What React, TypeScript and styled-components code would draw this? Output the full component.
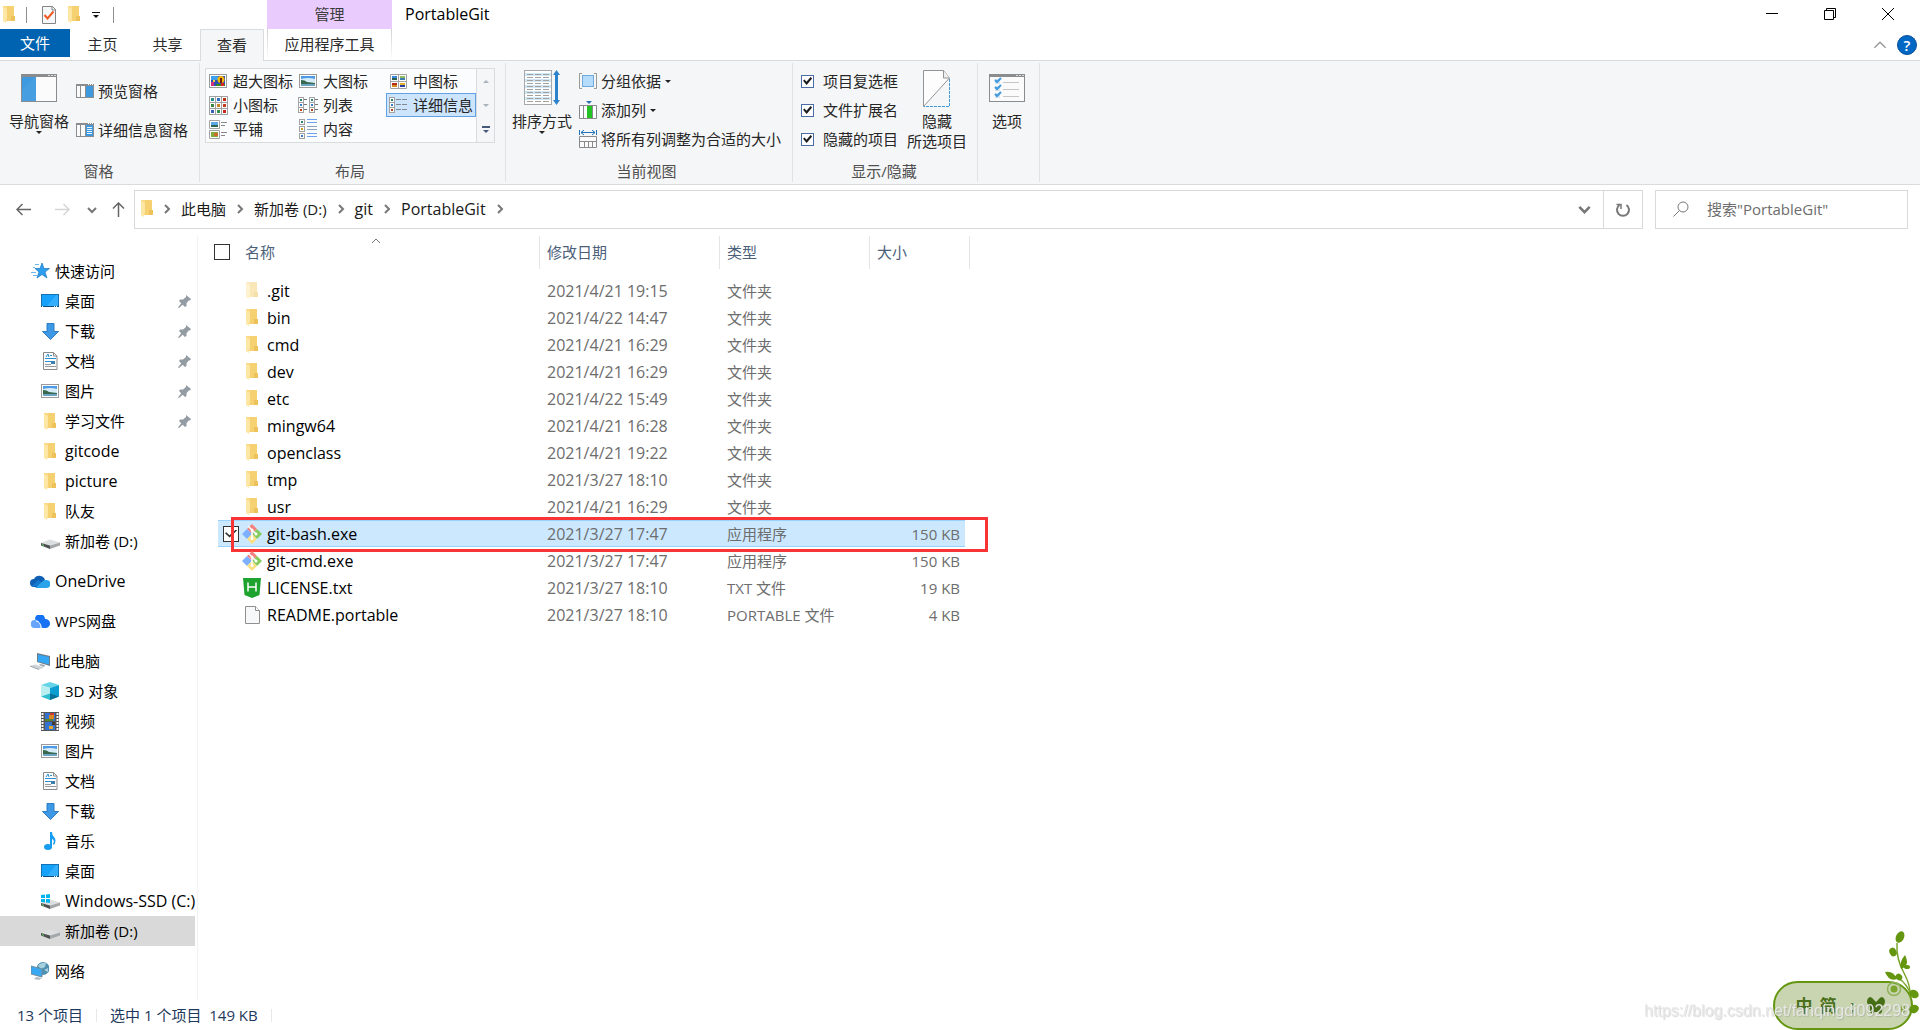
import React from "react";
import styled, { createGlobalStyle, css } from "styled-components";

const GlobalStyle = createGlobalStyle`
  *, *::before, *::after { box-sizing: border-box; }
  html, body, #root { height: 100%; }
  body {
    margin: 0;
    background: #fff;
    color: #000;
    font: 15px/20px "Open Sans", "Noto Sans CJK SC", sans-serif;
    overflow: hidden;
  }
  button, input { font: inherit; color: inherit; }
  svg { display: block; flex: none; }
`;

/* ---------- window frame ---------- */

const Window = styled.div`
  display: flex;
  flex-direction: column;
  min-height: 100vh;
  position: relative;
`;

const PlainButton = styled.button`
  display: flex;
  align-items: center;
  justify-content: center;
  border: 0;
  padding: 0;
  margin: 0;
  background: transparent;
  white-space: nowrap;
`;

const TitleBar = styled.header`
  display: flex;
  height: 29px;
  padding-right: 3px;
`;

const QuickAccess = styled.div`
  display: flex;
  align-items: center;
  width: 267px;
  padding-left: 3px;
`;

const QuickDivider = styled.span<{ $left: number; $right: number }>`
  width: 1px;
  height: 16px;
  margin: 0 ${(p) => p.$right}px 0 ${(p) => p.$left}px;
  background: #8e8e8e;
`;

const QuickTools = styled.div`
  display: flex;
  align-items: center;
  gap: 12px;
`;

const ContextTab = styled.div`
  width: 125px;
  line-height: 28px;
  background: #e9ccfd;
  color: #3c3c3c;
  text-align: center;
`;

const WindowTitle = styled.h1`
  flex: 1;
  margin: 0 0 0 13px;
  font-size: 16px;
  font-weight: 400;
  line-height: 28px;
`;

const CaptionButton = styled(PlainButton)`
  width: 58px;
  height: 28px;
`;

const TabBar = styled.nav`
  display: flex;
  height: 32px;
  color: #2b2b2b;
  border-bottom: 1px solid #dadbdc;
`;

const FileTab = styled(PlainButton)`
  width: 70px;
  height: 28px;
  background: #0063b1;
  color: #fff;
`;

const Tab = styled(PlainButton)<{ $active?: boolean }>`
  width: 65px;
  height: 31px;
  padding-bottom: 2px;
  ${(p) =>
    p.$active &&
    css`
      width: 64px;
      height: 32px;
      background: #f5f6f7;
      border: 1px solid #dadbdc;
      border-bottom: 0;
    `}
`;

const ToolsTab = styled(PlainButton)`
  width: 125px;
  height: 31px;
  margin-left: 3px;
  padding-bottom: 2px;
  border: solid;
  border-width: 0 1px;
  border-image: linear-gradient(#d0d0d0, #fff) 1;
`;

const TabBarEnd = styled.div`
  display: flex;
  align-items: center;
  gap: 10px;
  margin-left: auto;
  padding-right: 3px;
`;

const HelpButton = styled(PlainButton)`
  width: 20px;
  height: 20px;
  border-radius: 50%;
  border: 1px solid #0b4f94;
  background: #0067c5;
  color: #fff;
  font-weight: 600;
`;

/* ---------- ribbon ---------- */

const Ribbon = styled.section`
  display: flex;
  height: 124px;
  padding: 2px 0;
  background: #f5f6f7;
  border-bottom: 1px solid #dadbdc;
  color: #262626;
`;

const Group = styled.div<{ $left: number; $right: number }>`
  display: flex;
  flex-direction: column;
  border-right: 1px solid #e2e3e4;
  padding: 0 ${(p) => p.$right}px 0 ${(p) => p.$left}px;
`;

const GroupBody = styled.div<{ $gap: number }>`
  display: flex;
  flex: 1;
  align-items: flex-start;
  gap: ${(p) => p.$gap}px;
`;

const GroupLabel = styled.div`
  height: 21px;
  color: #4f4f4f;
  text-align: center;
`;

const BigButton = styled(PlainButton)`
  flex-direction: column;
  padding-top: 5px;
  min-width: 36px;
`;

const BigIcon = styled.span`
  display: flex;
  align-items: center;
  height: 40px;
  margin-bottom: 3px;
`;

const Commands = styled.div<{ $top: number; $gap: number }>`
  display: flex;
  flex-direction: column;
  gap: ${(p) => p.$gap}px;
  padding-top: ${(p) => p.$top}px;
`;

const Command = styled(PlainButton)`
  height: 24px;
  gap: 4px;
  justify-content: flex-start;
`;

const Caret = styled.span<{ $color?: string; $up?: boolean }>`
  width: 0;
  height: 0;
  border: 3px solid transparent;
  border-top: 3px solid ${(p) => p.$color ?? "#222"};
  border-bottom: 0;
  transform: ${(p) => (p.$up ? "rotate(180deg)" : "none")};
`;

const Gallery = styled.div`
  display: flex;
  height: 75px;
  margin-top: 5px;
  border: 1px solid #dadbdc;
  background: #fbfcfd;
`;

const GalleryGrid = styled.div`
  display: grid;
  grid-template-columns: repeat(3, 90px);
  grid-auto-rows: 24px;
`;

const GalleryItem = styled(PlainButton)<{ $selected?: boolean }>`
  justify-content: flex-start;
  gap: 5px;
  padding-left: 1px;
  border: 1px solid ${(p) => (p.$selected ? "#62a2e4" : "transparent")};
  background: ${(p) => (p.$selected ? "#cce4fc" : "transparent")};
`;

const GalleryScroll = styled.div`
  display: flex;
  flex-direction: column;
  width: 18px;
  border-left: 1px solid #dadbdc;
  background: #f5f6f7;
`;

const ScrollButton = styled(PlainButton)`
  flex: 1;
  flex-direction: column;
  gap: 2px;
`;

const MoreBar = styled.span`
  width: 8px;
  height: 2px;
  background: #46597a;
`;

const CheckLabel = styled.label`
  display: flex;
  align-items: center;
  gap: 9px;
  height: 24px;
  white-space: nowrap;
`;

const RibbonCheckbox = styled.input`
  appearance: none;
  display: grid;
  place-items: center;
  width: 13px;
  height: 13px;
  margin: 0;
  border: 1px solid #4a6da5;
  background: #fff;
  &:checked::before {
    content: "";
    width: 9px;
    height: 8px;
    background: #1b1b1b;
    clip-path: polygon(0 48%, 16% 30%, 38% 58%, 84% 0, 100% 18%, 40% 100%);
  }
`;

/* ---------- address row ---------- */

const AddressRow = styled.div`
  display: flex;
  align-items: center;
  padding: 5px 12px 7px 0;
`;

const NavButtons = styled.div`
  display: flex;
  align-items: center;
  width: 134px;
  padding-left: 16px;
`;

const NavButton = styled(PlainButton)<{ $gap: number }>`
  margin-right: ${(p) => p.$gap}px;
`;

const AddressBox = styled.div`
  display: flex;
  flex: 1;
  height: 39px;
  border: 1px solid #d9d9d9;
`;

const Crumbs = styled.div`
  display: flex;
  align-items: center;
  flex: 1;
  padding: 0 0 2px 6px;
`;

const Crumb = styled.a<{ $latin: boolean }>`
  color: #1a1a1a;
  font-size: ${(p) => (p.$latin ? 16 : 15)}px;
  text-decoration: none;
  white-space: nowrap;
`;

const CrumbArrow = styled.span`
  display: flex;
  justify-content: center;
  width: 28px;
`;

const DropButton = styled(PlainButton)`
  width: 38px;
`;

const RefreshButton = styled(PlainButton)`
  width: 39px;
  border-left: 1px solid #d9d9d9;
`;

const SearchBox = styled.label`
  display: flex;
  align-items: center;
  gap: 18px;
  width: 253px;
  height: 39px;
  margin-left: 12px;
  padding: 0 0 2px 17px;
  border: 1px solid #d9d9d9;
`;

const SearchInput = styled.input`
  flex: 1;
  min-width: 0;
  border: 0;
  padding: 0;
  outline: 0;
  background: transparent;
  &::placeholder {
    color: #6d6d6d;
    opacity: 1;
  }
`;

/* ---------- body ---------- */

const Body = styled.div`
  display: flex;
  flex: 1;
`;

const Sidebar = styled.nav`
  width: 198px;
  padding: 20px 2px 0 0;
  border-right: 1px solid #f2f2f2;
`;

const TreeSection = styled.div`
  margin-bottom: 10px;
`;

const TreeItem = styled.a<{ $child?: boolean; $selected?: boolean; $latin: boolean }>`
  display: flex;
  align-items: center;
  height: 30px;
  gap: 5px;
  padding-left: ${(p) => (p.$child ? 40 : 30)}px;
  background: ${(p) => (p.$selected ? "#d9d9d9" : "transparent")};
  color: #000;
  font-size: ${(p) => (p.$latin ? 16 : 15)}px;
  text-decoration: none;
  white-space: nowrap;
`;

const IconSlot = styled.span`
  display: flex;
  flex: none;
  justify-content: center;
  width: 20px;
`;

const PinSlot = styled.span`
  margin-left: auto;
  padding-right: 4px;
`;

const Main = styled.main`
  flex: 1;
`;

const FileTable = styled.table`
  width: 772px;
  table-layout: fixed;
  border-collapse: separate;
  border-spacing: 0;
  text-align: left;
`;

const Column = styled.col<{ $width: number }>`
  width: ${(p) => p.$width}px;
`;

const HeadCell = styled.th<{ $left: number }>`
  position: relative;
  height: 41px;
  padding: 0;
  vertical-align: top;
  font-weight: 400;
  color: #4c607a;
  & > div {
    display: flex;
    align-items: center;
    gap: 15px;
    height: 33px;
    padding: 0 0 2px ${(p) => p.$left}px;
    border-right: 1px solid #e5e5e5;
  }
`;

const SortMark = styled.span`
  position: absolute;
  top: 0;
  left: 173px;
`;

const FileCheckbox = styled.input`
  appearance: none;
  display: grid;
  place-items: center;
  flex: none;
  width: 16px;
  height: 16px;
  margin: 0;
  border: 1px solid #333;
  background: #fff;
  &:checked::before {
    content: "";
    width: 12px;
    height: 8px;
    background: #333;
    clip-path: polygon(0 46%, 10% 34%, 38% 72%, 90% 0, 100% 12%, 38% 100%);
  }
`;

const FileRow = styled.tr<{ $selected?: boolean }>`
  position: relative;
  height: 27px;
  ${(p) =>
    p.$selected &&
    css`
      td:not(:first-child):not(:last-child) {
        background: #cce8ff;
        box-shadow: inset 0 1px #99d1ff, inset 0 -1px #99d1ff;
      }
    `}
`;

const Cell = styled.td<{ $latin?: boolean; $right?: boolean }>`
  padding: 0 ${(p) => (p.$right ? 5 : 0)}px 0 ${(p) => (p.$right ? 0 : 7)}px;
  color: #6d6d6d;
  font-size: ${(p) => (p.$latin ? 16 : 15)}px;
  text-align: ${(p) => (p.$right ? "right" : "left")};
  white-space: nowrap;
`;

const NameCell = styled(Cell)`
  padding-left: 5px;
  color: #000;
`;

const NameContent = styled.div`
  display: flex;
  align-items: center;
  gap: 3px;
`;

const CheckSlot = styled.span`
  width: 16px;
  height: 16px;
`;

const FileIcon = styled.span<{ $faded?: boolean }>`
  display: flex;
  width: 20px;
  margin-right: 2px;
  justify-content: center;
  opacity: ${(p) => (p.$faded ? 0.5 : 1)};
`;

const HighlightBox = styled.span`
  position: absolute;
  inset: -3px -18px -5px 33px;
  border: 3px solid #f83434;
  pointer-events: none;
`;

const StatusBar = styled.footer`
  display: flex;
  align-items: center;
  gap: 13px;
  height: 30px;
  padding-left: 17px;
  color: #1e395b;
`;

const StatusDivider = styled.span`
  width: 1px;
  height: 13px;
  background: #e8e8e8;
`;

/* ---------- input method badge and page mark ---------- */

const ImeBadge = styled.div`
  position: fixed;
  right: 7px;
  bottom: 0;
  display: flex;
  align-items: center;
  gap: 6px;
  width: 140px;
  height: 49px;
  padding-left: 20px;
  border: 2px solid #64960f;
  border-radius: 25px;
  background: #c9d5b1;
  color: #4a701c;
  font-size: 17px;
  font-weight: 600;
`;

const ImeMark = styled.span`
  width: 18px;
  text-align: center;
`;

const Vine = styled.div`
  position: fixed;
  right: 0;
  bottom: 14px;
`;

const PageMark = styled.div`
  position: fixed;
  right: 10px;
  bottom: 9px;
  color: rgba(232, 232, 232, 0.95);
  text-shadow: 1px 1px 1px rgba(120, 120, 120, 0.3);
  font: 16px/20px "Liberation Sans", Arial, sans-serif;
`;

/* ---------- icons ---------- */

const FolderIcon = () => (
  <svg width="12" height="17" viewBox="0 0 12 17">
    <path d="M3 0h8v10h1v5H3z" fill="#f6d172" />
    <path d="M8 10h4v5H8z" fill="#edc25a" />
    <path d="M0 0h3l1 1v11l-1 5-3-2z" fill="#fee7a4" />
    <path d="M0 0h3l1 1v2L0 1z" fill="#fbd987" />
  </svg>
);

const CheckDocIcon = () => (
  <svg width="14" height="18" viewBox="0 0 14 18">
    <path d="M.5.5h10l3 3v14H.5z" fill="#f4f8fb" stroke="#848484" />
    <path d="M10 0v4h4" fill="none" stroke="#848484" />
    <path d="M2.500 9l3 3.500 6-7" fill="none" stroke="#f05a22" strokeWidth="2" />
  </svg>
);

const QuickMenuIcon = () => (
  <svg width="8" height="6" viewBox="0 0 8 6">
    <path d="M0 0h8v1H0zM1 3h6L4 6z" fill="#111" />
  </svg>
);

const MinimizeIcon = () => (
  <svg width="12" height="12">
    <path d="M0 5.500h12" stroke="#000" />
  </svg>
);

const RestoreIcon = () => (
  <svg width="12" height="12" fill="none" stroke="#000">
    <path d="M.5 2.500h9v9h-9zM2.500 2.500v-2h9v9h-2" />
  </svg>
);

const CloseIcon = () => (
  <svg width="12" height="12">
    <path d="M0 0l12 12M12 0L0 12" stroke="#000" />
  </svg>
);

const Chevron = ({ dir, color = "#777", size = 10, weight = 1 }: { dir: "up" | "down" | "right"; color?: string; size?: number; weight?: number }) => {
  const paths = { up: "M1 7l4-4 4 4", down: "M1 3l4 4 4-4", right: "M3 1l4 4-4 4" };
  return (
    <svg width={size} height={size} viewBox="0 0 10 10">
      <path d={paths[dir]} fill="none" stroke={color} strokeWidth={weight} />
    </svg>
  );
};

const NavPaneIcon = () => (
  <svg width="36" height="28">
    <rect x=".5" y=".5" width="35" height="27" fill="#fbfbfb" stroke="#8a8c8e" />
    <path d="M0 0h36v3H0z" fill="#8a8c8e" />
    <path d="M27 1h2v1h-2zM30 1h2v1h-2zM33 1h2v1h-2z" fill="#dcdcdc" />
    <path d="M1 3h14v24H1z" fill="#3f99df" />
    <path d="M1 16L14 3h1v24H1z" fill="#55a5e4" opacity=".4" />
  </svg>
);

const PaneIcon = ({ lines }: { lines?: boolean }) => (
  <svg width="18" height="14">
    <rect x=".5" y=".5" width="17" height="13" fill="#fbfbfb" stroke="#8a8c8e" />
    <path d="M0 0h18v2H0zM4 2h1v12H4zM9 2h1v12H9z" fill="#8a8c8e" />
    <path d="M12 0h1v1h-1zM14 0h1v1h-1zM16 0h1v1h-1z" fill="#fff" />
    <path d="M10 2h7v11h-7z" fill="#3f99df" />
    {lines && <path d="M11 4.500h5M11 6.500h5M11 8.500h5M11 10.500h5" stroke="#e8f4fd" />}
  </svg>
);

const ExtraLargeIcon = () => (
  <svg width="18" height="14">
    <rect x=".5" y=".5" width="17" height="13" fill="#fff" stroke="#9a9a9a" />
    <path d="M2 2h14v10H2z" fill="#2d4fb5" />
    <path d="M2 2h7v4H2z" fill="#3fa0ee" />
    <circle cx="12" cy="5.500" r="3.500" fill="#f5b800" />
    <path d="M11 4h2v5h-2z" fill="#6b1c12" />
    <path d="M2 8h3v4H2z" fill="#cf2f7c" />
    <path d="M4 6h2v2H4z" fill="#f4d43e" />
    <path d="M7 10h9v2H7z" fill="#37861f" />
    <path d="M12 9h3v3h-3z" fill="#d22" />
  </svg>
);

const PictureIcon = () => (
  <svg width="18" height="14">
    <rect x=".5" y=".5" width="17" height="13" fill="#fff" stroke="#9a9a9a" />
    <path d="M2 2h14v10H2z" fill="#4d9be6" />
    <path d="M2 5q7-2 14 0v4H2z" fill="#d5ecf8" />
    <path d="M2 6q4 0 6 2l8 1v1H2z" fill="#35684c" />
    <path d="M2 10h14v2H2z" fill="#6da3c2" />
  </svg>
);

const Thumb = ({ x, y, fill }: { x: number; y: number; fill: string }) => (
  <g>
    <rect x={x + 0.5} y={y + 0.5} width="5" height="5" fill="#fff" stroke="#a2a2a2" />
    <rect x={x + 2} y={y + 2} width="2" height="2" fill={fill} />
  </g>
);

const MediumIcon = () => (
  <svg width="17" height="15">
    <path d="M.5.5h16v14H.5zM8.500 0v15M0 7.500h17" fill="#fff" stroke="#a2a2a2" />
    <path d="M2 2h5v2H2z" fill="#3a8be0" />
    <path d="M2 4h5v2H2z" fill="#2f6450" />
    <path d="M10 2h5v2h-5z" fill="#91bb5d" />
    <path d="M10 4h5v2h-5z" fill="#3d7db5" />
    <path d="M2 9h5v2H2z" fill="#b52919" />
    <path d="M2 11h5v2H2z" fill="#d78b1d" />
    <path d="M10 9h5v2h-5z" fill="#e5b22a" />
    <path d="M10 11h5v2h-5z" fill="#293da2" />
  </svg>
);

const SmallIconsIcon = () => (
  <svg width="19" height="19">
    {["#2d8c8c", "#3270cc", "#bb2f18", "#3a8744", "#c7831e", "#c23c1d", "#3561b8", "#328f50", "#c6281d"].map((c, i) => (
      <g key={i}>
        <rect x={(i % 3) * 6 + 0.5} y={Math.floor(i / 3) * 6 + 0.5} width="6" height="6" fill="#fff" stroke="#a2a2a2" />
        <rect x={(i % 3) * 6 + 2} y={Math.floor(i / 3) * 6 + 2} width="3" height="3" fill={c} />
      </g>
    ))}
  </svg>
);

const thumbColors = ["#30866c", "#397dca", "#c0411d"];

const ListIcon = () => (
  <svg width="20" height="17">
    {[0, 11].map((x) =>
      thumbColors.map((c, i) => (
        <g key={`${x}${i}`}>
          <Thumb x={x} y={i * 5} fill={c} />
          <path d={`M${x + 6} ${i * 5 + 2.5}h3`} stroke="#777" />
        </g>
      ))
    )}
  </svg>
);

const DetailsIcon = () => (
  <svg width="18" height="17">
    {thumbColors.map((c, i) => (
      <g key={i}>
        <Thumb x={0} y={i * 5} fill={c} />
        <path d={`M7 ${i * 5 + 2.5}h5M13 ${i * 5 + 2.5}h5`} stroke="#828a91" />
      </g>
    ))}
  </svg>
);

const TilesIcon = () => (
  <svg width="18" height="19">
    <path d="M.5.500h10v8H.5zM.5 10.500h10v8H.5z" fill="#fff" stroke="#a2a2a2" />
    <path d="M2 2h7v3H2z" fill="#5aa7ea" />
    <path d="M2 5h7v2H2z" fill="#2f6450" />
    <path d="M2 12h7v5H2z" fill="#7fae3f" />
    <path d="M5 13h4v3H5z" fill="#cf6b2c" />
    <path d="M12 2.500h6M12 5.500h4M12 12.500h6M12 15.500h4" stroke="#888" />
  </svg>
);

const ContentIcon = () => (
  <svg width="18" height="20">
    {["#30866c", "#c79a2c", "#397dca"].map((c, i) => (
      <g key={i}>
        <Thumb x={0} y={i * 7} fill={c} />
        <path d={`M8 ${i * 7 + 0.5}h10M8 ${i * 7 + 3.5}h10`} stroke={i === 1 ? "#8fa3b8" : "#6ea2ec"} />
      </g>
    ))}
  </svg>
);

const SortIcon = () => (
  <svg width="36" height="36">
    <rect x=".5" y=".5" width="27" height="34" fill="#fff" stroke="#a8a8a8" />
    <path d="M1 3h26v3H1zM1 9h26v3H1zM1 15h26v3H1zM1 21h26v3H1zM1 27h26v3H1z" fill="#cfe6f5" />
    {[5, 8, 11, 14, 17, 20, 23, 26, 29, 32].map((y) => (
      <path key={y} d={`M3 ${y - 0.5}h6M11 ${y - 0.5}h6M19 ${y - 0.5}h6`} stroke="#a6a19c" />
    ))}
    <path d="M32.500 0l3.500 5h-2v25h2l-3.500 5-3.500-5h2V5h-2z" fill="#2d83cb" />
  </svg>
);

const GroupByIcon = () => (
  <svg width="18" height="16">
    <path d="M3 .5H.5v15H3M15 .5h2.500v15H15" fill="none" stroke="#999" />
    <rect x="3.500" y="2.500" width="11" height="11" fill="#b5dcfb" stroke="#6fa8da" />
  </svg>
);

const AddColumnIcon = () => (
  <svg width="18" height="18">
    <path d="M7 0h6l-3 3z" fill="#2b6fb0" />
    <path d="M.5 4.500h17v13H.5zM4.500 4v14M13.500 4v14" fill="#fff" stroke="#8a8a8a" />
    <path d="M8 5h5v12H8z" fill="#22c322" />
  </svg>
);

const FitColumnsIcon = () => (
  <svg width="18" height="18">
    <path d="M.5 0v5M17.500 0v5M2 2.500h14M5 0L2 2.500 5 5M13 0l3 2.500L13 5" fill="none" stroke="#2272b8" />
    <path d="M.5 6.500h17v11H.5zM0 11.500h18M5.500 11v7M9.500 11v7M13.500 11v7" fill="#fbfbfb" stroke="#8a8a8a" />
  </svg>
);

const HideIcon = () => (
  <svg width="28" height="37">
    <path d="M.5 36.500V.5h20l6 7.500z" fill="#fdfdfd" stroke="#949494" />
    <path d="M20.500.5V8h6" fill="#efefef" stroke="#949494" />
    <path d="M26.500 9v27.500H1" fill="none" stroke="#3f99df" strokeDasharray="3 1" />
  </svg>
);

const OptionsIcon = () => (
  <svg width="36" height="28">
    <rect x=".5" y=".5" width="35" height="27" fill="#fbfbfb" stroke="#8a8c8e" />
    <path d="M0 0h36v3H0z" fill="#8a8c8e" />
    <path d="M27 1h2v1h-2zM30 1h2v1h-2zM33 1h2v1h-2z" fill="#dcdcdc" />
    {[4, 11, 18].map((y) => (
      <g key={y}>
        <path d={`M6 ${y + 1}h5v5H6z`} fill="#d9e6ef" />
        <path d={`M6 ${y + 2}l2 2 4-4`} fill="none" stroke="#3f99df" strokeWidth="2" />
        <path d={`M14 ${y + 4.5}h16`} stroke="#c6c6c6" />
      </g>
    ))}
  </svg>
);

const ArrowIcon = ({ dir, color }: { dir: "left" | "right" | "up"; color: string }) => {
  const turn = { left: 0, right: 180, up: 90 }[dir];
  return (
    <svg width="15" height="15" viewBox="0 0 15 15">
      <path d="M15 7.500H1M6.500 2L1 7.500 6.500 13" transform={`rotate(${turn} 7.500 7.500)`} fill="none" stroke={color} strokeWidth="1.500" />
    </svg>
  );
};

const RefreshIcon = () => (
  <svg width="16" height="16" fill="none" stroke="#777" strokeWidth="2">
    <path d="M11.500 3A6 6 0 1 1 4.500 3" />
    <path d="M1.500 2.500H6V7" strokeWidth="1.500" />
  </svg>
);

const SearchIcon = () => (
  <svg width="16" height="16" fill="none" stroke="#777">
    <circle cx="10" cy="6" r="5" />
    <path d="M6.500 9.500L.5 15.500" />
  </svg>
);

const StarIcon = () => (
  <svg width="19" height="16" viewBox="0 0 19 16">
    <path d="M11 0l2 5.500h5.500L14 9l2 6-5-3.500L6 15l2-6-4-3.500h5z" fill="#2b9fee" stroke="#1877c4" strokeWidth=".7" />
    <path d="M4 1.500h4M2 4.500h2M0 9.500h5M2 12.500h4" stroke="#69b8ee" />
  </svg>
);

const DesktopIcon = () => (
  <svg width="18" height="14">
    <rect x=".5" y=".5" width="17" height="12" fill="#16a1fb" stroke="#1272b4" />
    <path d="M6 12L15 1h2v11z" fill="#35aefc" />
    <path d="M0 12h18v1H0z" fill="#0d4f80" />
    <path d="M1 12h1v1H1zM13 12h1v1h-1zM15 12h1v1h-1z" fill="#fff" />
  </svg>
);

const DownloadIcon = () => (
  <svg width="17" height="17">
    <path d="M5 .5h7v8h4.500l-8 8-8-8H5z" fill="#3d99e6" stroke="#2d7cc4" />
  </svg>
);

const DocumentIcon = () => (
  <svg width="15" height="18">
    <path d="M.5.5h10l3.500 3.500v13.500H.5z" fill="#fafbfc" stroke="#8a8a8a" />
    <path d="M10.500.5V4H14" fill="none" stroke="#8a8a8a" />
    <path d="M3 5l2-3 1 3M7 3.500h2M2 6.500h11M2 9.500h6" fill="none" stroke="#2a8ed0" />
    <path d="M2 12.500h6M2 14.500h11" stroke="#9a9a9a" />
    <path d="M8 9h4v3H8z" fill="#3a7fae" />
  </svg>
);

const DriveIcon = ({ system }: { system?: boolean }) => (
  <svg width="19" height="15" viewBox="0 0 19 15">
    <path d="M0 9l9-3.500 10 3-10 3z" fill="#dcdee0" />
    <path d="M0 9l9 2.500V15l-9-3.500z" fill="#4c5150" />
    <path d="M9 11.500l10-3v3L9 15z" fill="#a5a8aa" />
    <path d="M1 10l2 1v1l-2-1z" fill="#6ad36a" />
    {system && <path d="M0 1l4-.5V4H0zM5 .4L9 0v4H5zM0 5h4v3.500L0 8zM5 5h4v4l-4-.5z" fill="#00b5ee" />}
  </svg>
);

const OneDriveIcon = () => (
  <svg width="20" height="13" viewBox="0 0 20 13">
    <path d="M4 12a4 4 0 0 1 0-8 6 6 0 0 1 11 1l-7 7z" fill="#0f5fb4" />
    <path d="M2 11l6-6 9 6z" fill="#1478cf" />
    <path d="M5 13h11.500a4 4 0 0 0 0-8q-2-.5-3.500 1z" fill="#29a4ea" />
  </svg>
);

const WpsIcon = () => (
  <svg width="19" height="13" viewBox="0 0 19 13">
    <path d="M4 4a5 5 0 0 1 10 0 4.500 4.500 0 0 1 1 9H11z" fill="#1672f3" />
    <path d="M4 13a4 4 0 0 1-.5-8Q7 4 8 7l4 6z" fill="#65a5fb" />
    <path d="M5 6q5 1 5 7" fill="none" stroke="#fff" />
  </svg>
);

const ComputerIcon = () => (
  <svg width="20" height="17" viewBox="0 0 20 17">
    <path d="M7 0l13 3v10L7 9z" fill="#6f7b84" />
    <path d="M8 1.500l11 2.500v7.500L8 8.500z" fill="#35a8f5" />
    <path d="M10 11l5 1-1 2-5-2z" fill="#9da6ad" />
    <path d="M0 13l5-1.500 9 3L9 16.500z" fill="#cfd4d8" />
    <path d="M0 13l9 3.500" stroke="#9da6ad" />
  </svg>
);

const CubeIcon = () => (
  <svg width="18" height="18">
    <path d="M9 0l9 3-9 3-9-3z" fill="#65d4e6" />
    <path d="M0 3l9 3v12l-9-3.500z" fill="#b9eff1" />
    <path d="M9 6l9-3v11.500L9 18z" fill="#0c9ed1" />
    <path d="M0 14.500l9-3v6.500z" fill="#30bfd0" />
    <path d="M9 11.500l9 3L9 18z" fill="#087197" />
  </svg>
);

const VideoIcon = () => (
  <svg width="18" height="19">
    <path d="M0 0h18v19H0z" fill="#555" />
    <path d="M1.500 1v18M16.500 1v18" stroke="#fff" strokeWidth="2" strokeDasharray="2 1" />
    <path d="M4 1h10v8H4zM4 10h10v8H4z" fill="#3272d2" />
    <path d="M8 3h5v4H8z" fill="#d98620" />
    <path d="M4 7h8v2H4z" fill="#54862f" />
    <path d="M9 1h4v2H9z" fill="#d13a2f" />
    <path d="M8 14h4v3H8z" fill="#e2a52b" />
    <path d="M11 10h3v3h-3z" fill="#43352b" />
  </svg>
);

const MusicIcon = () => (
  <svg width="12" height="18">
    <ellipse cx="4" cy="15" rx="4" ry="3" fill="#169cf0" />
    <path d="M6 0h2q0 3 2 5 3 3 0 8l-1-1q2-4-1-5v8H6z" fill="#169cf0" />
  </svg>
);

const NetworkIcon = () => (
  <svg width="18" height="18">
    <circle cx="12" cy="6.500" r="6.500" fill="#4f8fae" />
    <path d="M7 4q3-4 8-3l-1 4-4 2zM13 8l4-2v4z" fill="#a5d1df" />
    <path d="M0 4l11 3v8L0 12z" fill="#39a8f2" stroke="#718c9e" />
    <path d="M5 15l6 1-3 2-5-1z" fill="#b5bcc1" />
  </svg>
);

const PinIcon = () => (
  <svg width="13" height="13">
    <path d="M8 0l5 4-1 1.500-1-.2-2.500 3L8.500 11 7 12 4.700 9.700 1 13l-1-.5L3.200 8.300 1 6l1-1.500h3L8 2z" fill="#939ba3" />
  </svg>
);

const GitIcon = () => (
  <svg width="20" height="20" viewBox="0 0 20 20">
    <path d="M10 0l5 5-5 5-5-5z" fill="#f58080" />
    <path d="M15 5l5 5-5 5-5-5z" fill="#84cc5c" />
    <path d="M5 5l5 5-5 5-5-5z" fill="#7fb0ff" />
    <path d="M10 10l5 5-5 5-5-5z" fill="#fbe083" />
    <path d="M6 2l4 4v9M10 6l4 4" fill="none" stroke="#fff" strokeWidth="1.500" />
    <circle cx="10" cy="6" r="1.500" fill="#fff" />
    <circle cx="14" cy="10" r="1.500" fill="#fff" />
    <circle cx="10" cy="14.500" r="1.500" fill="#fff" />
  </svg>
);

const HBuilderIcon = () => (
  <svg width="18" height="20" viewBox="0 0 18 20">
    <path d="M0 0h18l-1.500 17L9 20l-7.500-3z" fill="#1fa32f" />
    <path d="M5 4.500v9M13 4.500v9M5 9h8" stroke="#fff" strokeWidth="1.500" fill="none" />
  </svg>
);

const BlankFileIcon = () => (
  <svg width="15" height="18">
    <path d="M.5.5h10l4 4v13H.5z" fill="#f7f8f9" stroke="#8f8f8f" />
    <path d="M10.500.5v4h4" fill="#fff" stroke="#8f8f8f" />
  </svg>
);

const ShirtIcon = () => (
  <svg width="18" height="17">
    <path d="M3 0q2 0 4 3l2 2 2-2q2-3 4-3 3 1 3 5l-1 3-2 1v6l-2 2-2-2H7l-2 2-2-2V9L1 8 0 5q0-4 3-5z" fill="#466e14" />
  </svg>
);

const VineIcon = () => (
  <svg width="36" height="86" viewBox="-1 -1 36 86" fill="#64960f">
    <path d="M12 12q-1 16 7 30 7 13 6 24" fill="none" stroke="#7ba52c" strokeWidth="1.500" />
    <path d="M8 45q10 2 17 16" fill="none" stroke="#7ba52c" strokeWidth="1.500" />
    <ellipse cx="15" cy="6" rx="4" ry="6" transform="rotate(25 15 6)" />
    <ellipse cx="8" cy="21" rx="3.500" ry="4.500" transform="rotate(-25 8 21)" />
    <path d="M20 24q-6 7-4 14l4-2q4-5 0-12z" />
    <ellipse cx="22" cy="36" rx="3" ry="2" />
    <path d="M0 41q8-2 12 7-8 3-12-7z" />
    <ellipse cx="14" cy="46" rx="3.500" ry="3" transform="rotate(50 14 46)" />
    <circle cx="9" cy="58" r="6.500" fill="none" stroke="#8fb35a" strokeWidth="1.500" />
    <circle cx="9" cy="58" r="3.500" fill="#7ba52c" />
    <ellipse cx="29" cy="63" rx="5" ry="4" transform="rotate(35 29 63)" />
    <ellipse cx="29" cy="78" rx="5" ry="4" transform="rotate(-25 29 78)" />
    <ellipse cx="18" cy="78" rx="2" ry="4" fill="#7ba52c" />
  </svg>
);

/* ---------- data ---------- */

type TreeEntry = { label: string; icon: React.ReactNode; pinned?: boolean; selected?: boolean };

const tree: { root: TreeEntry; children: TreeEntry[] }[] = [
  {
    root: { label: "快速访问", icon: <StarIcon /> },
    children: [
      { label: "桌面", icon: <DesktopIcon />, pinned: true },
      { label: "下载", icon: <DownloadIcon />, pinned: true },
      { label: "文档", icon: <DocumentIcon />, pinned: true },
      { label: "图片", icon: <PictureIcon />, pinned: true },
      { label: "学习文件", icon: <FolderIcon />, pinned: true },
      { label: "gitcode", icon: <FolderIcon /> },
      { label: "picture", icon: <FolderIcon /> },
      { label: "队友", icon: <FolderIcon /> },
      { label: "新加卷 (D:)", icon: <DriveIcon /> },
    ],
  },
  { root: { label: "OneDrive", icon: <OneDriveIcon /> }, children: [] },
  { root: { label: "WPS网盘", icon: <WpsIcon /> }, children: [] },
  {
    root: { label: "此电脑", icon: <ComputerIcon /> },
    children: [
      { label: "3D 对象", icon: <CubeIcon /> },
      { label: "视频", icon: <VideoIcon /> },
      { label: "图片", icon: <PictureIcon /> },
      { label: "文档", icon: <DocumentIcon /> },
      { label: "下载", icon: <DownloadIcon /> },
      { label: "音乐", icon: <MusicIcon /> },
      { label: "桌面", icon: <DesktopIcon /> },
      { label: "Windows-SSD (C:)", icon: <DriveIcon system /> },
      { label: "新加卷 (D:)", icon: <DriveIcon />, selected: true },
    ],
  },
  { root: { label: "网络", icon: <NetworkIcon /> }, children: [] },
];

type FileEntry = { name: string; date: string; type: string; size?: string; icon?: React.ReactNode; hidden?: boolean; selected?: boolean };

const files: FileEntry[] = [
  { name: ".git", date: "2021/4/21 19:15", type: "文件夹", hidden: true },
  { name: "bin", date: "2021/4/22 14:47", type: "文件夹" },
  { name: "cmd", date: "2021/4/21 16:29", type: "文件夹" },
  { name: "dev", date: "2021/4/21 16:29", type: "文件夹" },
  { name: "etc", date: "2021/4/22 15:49", type: "文件夹" },
  { name: "mingw64", date: "2021/4/21 16:28", type: "文件夹" },
  { name: "openclass", date: "2021/4/21 19:22", type: "文件夹" },
  { name: "tmp", date: "2021/3/27 18:10", type: "文件夹" },
  { name: "usr", date: "2021/4/21 16:29", type: "文件夹" },
  { name: "git-bash.exe", date: "2021/3/27 17:47", type: "应用程序", size: "150 KB", icon: <GitIcon />, selected: true },
  { name: "git-cmd.exe", date: "2021/3/27 17:47", type: "应用程序", size: "150 KB", icon: <GitIcon /> },
  { name: "LICENSE.txt", date: "2021/3/27 18:10", type: "TXT 文件", size: "19 KB", icon: <HBuilderIcon /> },
  { name: "README.portable", date: "2021/3/27 18:10", type: "PORTABLE 文件", size: "4 KB", icon: <BlankFileIcon /> },
];

const layouts = [
  { label: "超大图标", icon: <ExtraLargeIcon /> },
  { label: "大图标", icon: <PictureIcon /> },
  { label: "中图标", icon: <MediumIcon /> },
  { label: "小图标", icon: <SmallIconsIcon /> },
  { label: "列表", icon: <ListIcon /> },
  { label: "详细信息", icon: <DetailsIcon />, selected: true },
  { label: "平铺", icon: <TilesIcon /> },
  { label: "内容", icon: <ContentIcon /> },
];

const crumbs = ["此电脑", "新加卷 (D:)", "git", "PortableGit"];

const isLatin = (text: string) => /^[\x20-\x7e]+$/.test(text);

/* ---------- parts ---------- */

const TreeRow = ({ entry, child }: { entry: TreeEntry; child?: boolean }) => (
  <TreeItem href="#" $child={child} $selected={entry.selected} $latin={isLatin(entry.label)}>
    <IconSlot>{entry.icon}</IconSlot>
    {entry.label}
    {entry.pinned && (
      <PinSlot>
        <PinIcon />
      </PinSlot>
    )}
  </TreeItem>
);

const RibbonPanel = () => (
  <Ribbon>
    <Group $left={9} $right={11}>
      <GroupBody $gap={7}>
        <BigButton>
          <BigIcon><NavPaneIcon /></BigIcon>
          导航窗格
          <Caret />
        </BigButton>
        <Commands $top={16} $gap={15}>
          <Command><PaneIcon />预览窗格</Command>
          <Command><PaneIcon lines />详细信息窗格</Command>
        </Commands>
      </GroupBody>
      <GroupLabel>窗格</GroupLabel>
    </Group>

    <Group $left={5} $right={10}>
      <GroupBody $gap={0}>
        <Gallery>
          <GalleryGrid>
            {layouts.map((l) => (
              <GalleryItem key={l.label} $selected={l.selected}>
                <IconSlot>{l.icon}</IconSlot>
                {l.label}
              </GalleryItem>
            ))}
          </GalleryGrid>
          <GalleryScroll>
            <ScrollButton aria-label="向上"><Caret $up $color="#aab2bb" /></ScrollButton>
            <ScrollButton aria-label="向下"><Caret $color="#aab2bb" /></ScrollButton>
            <ScrollButton aria-label="更多"><MoreBar /><Caret $color="#46597a" /></ScrollButton>
          </GalleryScroll>
        </Gallery>
      </GroupBody>
      <GroupLabel>布局</GroupLabel>
    </Group>

    <Group $left={6} $right={11}>
      <GroupBody $gap={7}>
        <BigButton>
          <BigIcon><SortIcon /></BigIcon>
          排序方式
          <Caret />
        </BigButton>
        <Commands $top={6} $gap={5}>
          <Command><GroupByIcon />分组依据<Caret /></Command>
          <Command><AddColumnIcon />添加列<Caret /></Command>
          <Command><FitColumnsIcon />将所有列调整为合适的大小</Command>
        </Commands>
      </GroupBody>
      <GroupLabel>当前视图</GroupLabel>
    </Group>

    <Group $left={8} $right={10}>
      <GroupBody $gap={9}>
        <Commands $top={6} $gap={5}>
          {["项目复选框", "文件扩展名", "隐藏的项目"].map((t) => (
            <CheckLabel key={t}>
              <RibbonCheckbox type="checkbox" defaultChecked />
              {t}
            </CheckLabel>
          ))}
        </Commands>
        <BigButton>
          <BigIcon><HideIcon /></BigIcon>
          <span>隐藏</span>
          <span>所选项目</span>
        </BigButton>
      </GroupBody>
      <GroupLabel>显示/隐藏</GroupLabel>
    </Group>

    <Group $left={11} $right={14}>
      <BigButton>
        <BigIcon><OptionsIcon /></BigIcon>
        选项
      </BigButton>
    </Group>
  </Ribbon>
);

const FileList = () => (
  <FileTable>
    <colgroup>
      <Column $width={20} />
      <Column $width={322} />
      <Column $width={180} />
      <Column $width={150} />
      <Column $width={95} />
      <Column $width={5} />
    </colgroup>
    <thead>
      <tr>
        <HeadCell colSpan={2} $left={16}>
          <div>
            <FileCheckbox type="checkbox" aria-label="全选" />
            名称
          </div>
          <SortMark><Chevron dir="up" /></SortMark>
        </HeadCell>
        <HeadCell $left={7}><div>修改日期</div></HeadCell>
        <HeadCell $left={7}><div>类型</div></HeadCell>
        <HeadCell $left={7} colSpan={2}><div>大小</div></HeadCell>
      </tr>
    </thead>
    <tbody>
      {files.map((f) => (
        <FileRow key={f.name} $selected={f.selected}>
          <td />
          <NameCell $latin>
            <NameContent>
              {f.selected ? <FileCheckbox type="checkbox" defaultChecked aria-label={f.name} /> : <CheckSlot />}
              <FileIcon $faded={f.hidden}>{f.icon ?? <FolderIcon />}</FileIcon>
              {f.name}
            </NameContent>
          </NameCell>
          <Cell $latin>{f.date}</Cell>
          <Cell>{f.type}</Cell>
          <Cell $right>{f.size}</Cell>
          <td>{f.selected && <HighlightBox />}</td>
        </FileRow>
      ))}
    </tbody>
  </FileTable>
);

export default function App() {
  return (
    <Window>
      <GlobalStyle />
      <TitleBar>
        <QuickAccess>
          <FolderIcon />
          <QuickDivider $left={11} $right={15} />
          <QuickTools>
            <CheckDocIcon />
            <FolderIcon />
            <QuickMenuIcon />
          </QuickTools>
          <QuickDivider $left={13} $right={0} />
        </QuickAccess>
        <ContextTab>管理</ContextTab>
        <WindowTitle>PortableGit</WindowTitle>
        <CaptionButton aria-label="最小化"><MinimizeIcon /></CaptionButton>
        <CaptionButton aria-label="还原"><RestoreIcon /></CaptionButton>
        <CaptionButton aria-label="关闭"><CloseIcon /></CaptionButton>
      </TitleBar>

      <TabBar>
        <FileTab>文件</FileTab>
        <Tab>主页</Tab>
        <Tab>共享</Tab>
        <Tab $active>查看</Tab>
        <ToolsTab>应用程序工具</ToolsTab>
        <TabBarEnd>
          <PlainButton aria-label="折叠功能区"><Chevron dir="up" size={14} color="#999" /></PlainButton>
          <HelpButton>?</HelpButton>
        </TabBarEnd>
      </TabBar>

      <RibbonPanel />

      <AddressRow>
        <NavButtons>
          <NavButton $gap={24} aria-label="后退"><ArrowIcon dir="left" color="#666" /></NavButton>
          <NavButton $gap={17} aria-label="前进"><ArrowIcon dir="right" color="#d5d5d5" /></NavButton>
          <NavButton $gap={14} aria-label="最近位置"><Chevron dir="down" weight={2} /></NavButton>
          <NavButton $gap={0} aria-label="上移"><ArrowIcon dir="up" color="#666" /></NavButton>
        </NavButtons>
        <AddressBox>
          <Crumbs>
            <FolderIcon />
            <CrumbArrow><Chevron dir="right" weight={2} /></CrumbArrow>
            {crumbs.map((c) => (
              <React.Fragment key={c}>
                <Crumb href="#" $latin={isLatin(c)}>{c}</Crumb>
                <CrumbArrow><Chevron dir="right" weight={2} /></CrumbArrow>
              </React.Fragment>
            ))}
          </Crumbs>
          <DropButton aria-label="历史记录"><Chevron dir="down" size={13} weight={2} /></DropButton>
          <RefreshButton aria-label="刷新"><RefreshIcon /></RefreshButton>
        </AddressBox>
        <SearchBox>
          <SearchIcon />
          <SearchInput type="text" aria-label="搜索" placeholder={'搜索"PortableGit"'} />
        </SearchBox>
      </AddressRow>

      <Body>
        <Sidebar>
          {tree.map((s) => (
            <TreeSection key={s.root.label}>
              <TreeRow entry={s.root} />
              {s.children.map((c) => (
                <TreeRow key={c.label} entry={c} child />
              ))}
            </TreeSection>
          ))}
        </Sidebar>
        <Main>
          <FileList />
        </Main>
      </Body>

      <StatusBar>
        <span>13 个项目</span>
        <StatusDivider />
        <span>选中 1 个项目&nbsp; 149 KB</span>
        <StatusDivider />
      </StatusBar>

      <ImeBadge>
        <ImeMark>中</ImeMark>
        <ImeMark>简</ImeMark>
        <ImeMark>;</ImeMark>
        <ShirtIcon />
      </ImeBadge>
      <Vine><VineIcon /></Vine>
      <PageMark>https://blog.csdn.net/fanqingdi092298</PageMark>
    </Window>
  );
}
